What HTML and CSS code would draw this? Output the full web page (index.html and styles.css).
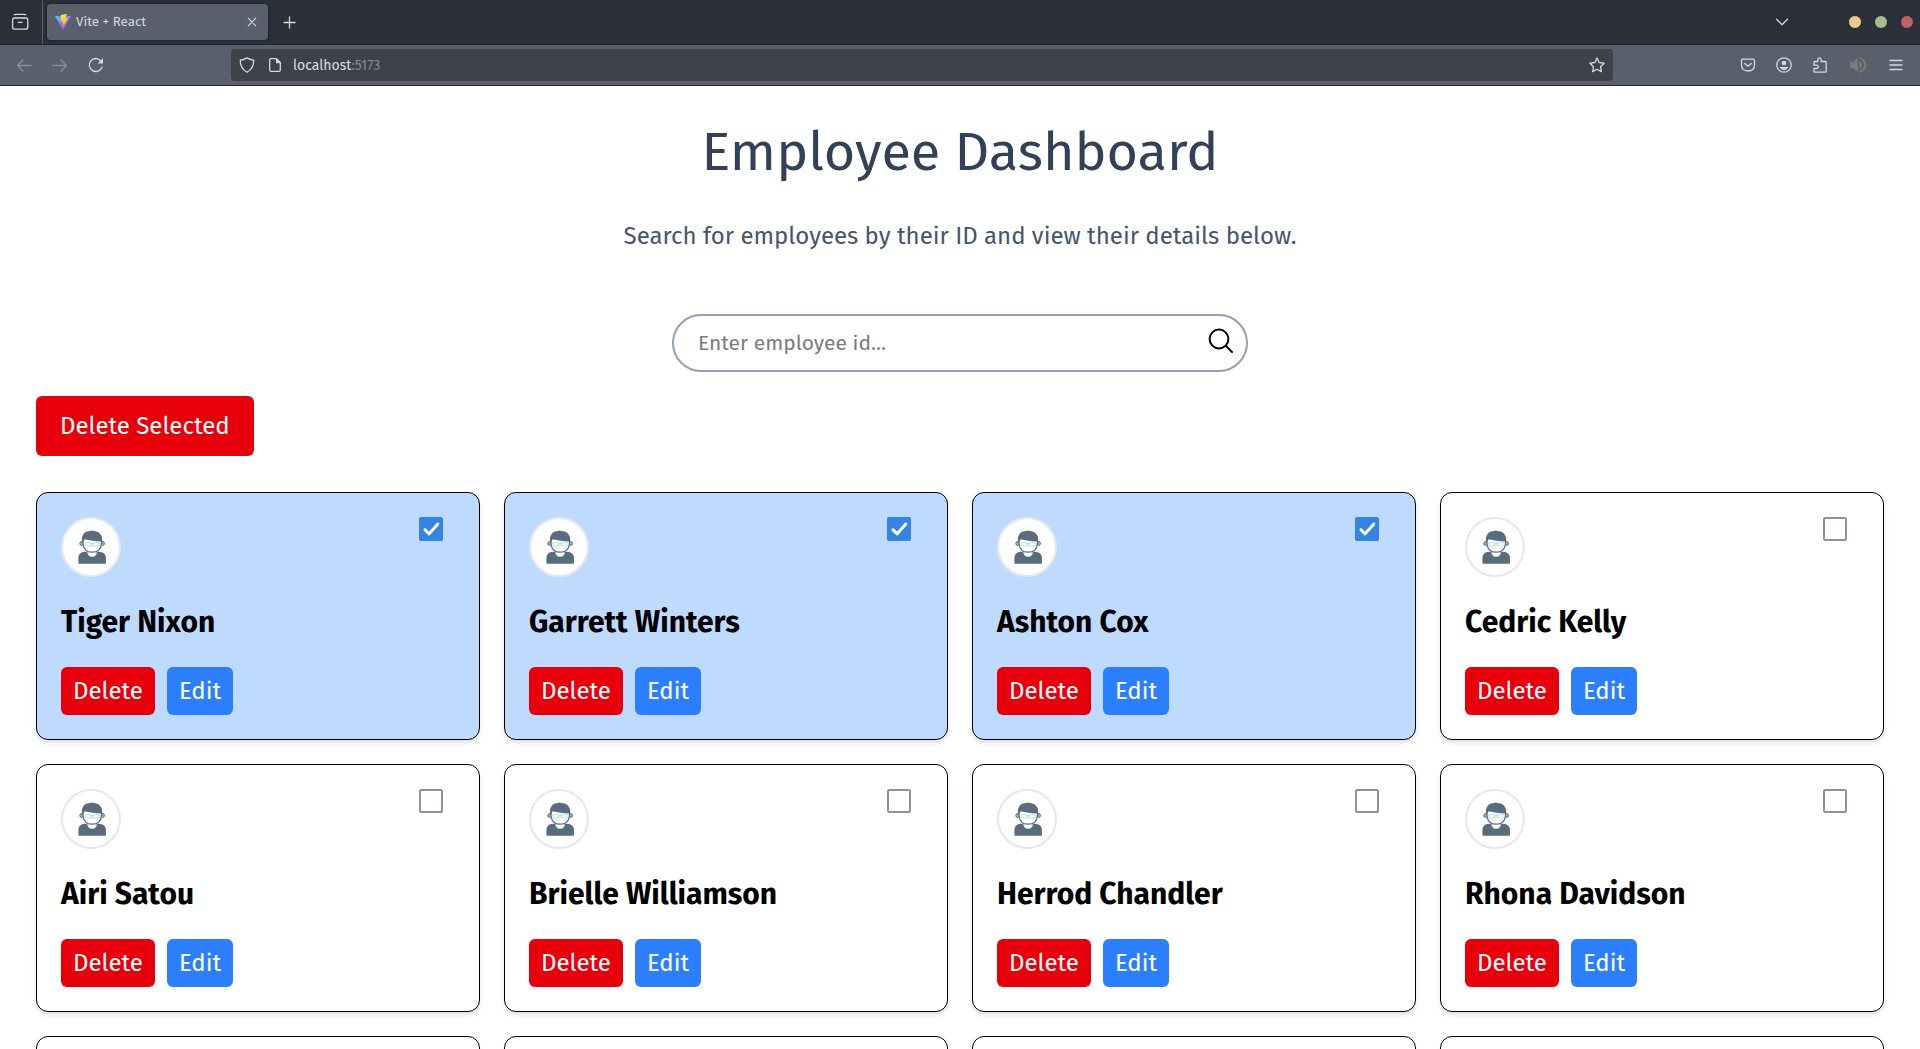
FILE: index.html
```html
<!DOCTYPE html>
<html lang="en">
<head>
<meta charset="utf-8">
<title>Vite + React</title>
<link rel="stylesheet" href="styles.css">
</head>
<body>
<svg class="defs" aria-hidden="true">
  <defs>
    <linearGradient id="vite-body" x1="0" y1="0" x2="0.6" y2="1"><stop offset="0" stop-color="#41d1ff"/><stop offset="1" stop-color="#bd34fe"/></linearGradient>
    <linearGradient id="vite-bolt" x1="0.4" y1="0" x2="0.6" y2="1"><stop offset="0" stop-color="#ffea83"/><stop offset="0.2" stop-color="#ffdd35"/><stop offset="1" stop-color="#ffa800"/></linearGradient>
  </defs>
  <symbol id="person" viewBox="0 0 56 56">
    <path d="M15.4 44.8V39.5Q15.4 32.9 22 32.8H36Q42.9 32.9 42.9 39.5V44.8Z" fill="#5a6b7d"/>
    <path d="M24.6 32.4H33.6Q33.6 37.6 29.1 37.6T24.6 32.4Z" fill="#fff" stroke="#b5e3da" stroke-width=".8"/>
    <circle cx="18.600" cy="24.500" r="1.900" fill="#a3adb8" stroke="#5a6b7d" stroke-width=".9"/>
    <circle cx="39.600" cy="24.500" r="1.900" fill="#a3adb8" stroke="#5a6b7d" stroke-width=".9"/>
    <path d="M20 20H38.400V25Q37.600 33.200 29.200 33.200T20 25Z" fill="#fff" stroke="#5a6b7d" stroke-width="1.200"/>
    <path d="M19 23.200V20.500C19 15.200 22.200 12.200 27 12.100Q28.500 10.800 30.400 12.100C36 12.500 39.200 15.700 39.200 21V23.200L37.800 22.400Q28.500 22.300 22 19.700Q20.400 21 20.400 23.200Z" fill="#5a6b7d"/>
    <path d="M22 23.800H28V27H22.400ZM30.200 23.800H36.200L35.800 27H30.200ZM28 24.600H30.200" fill="none" stroke="#b5e3da" stroke-width="1.100"/>
  </symbol>
</svg>

<header class="browser">
  <div class="tabbar">
    <svg class="view-icon" width="18" height="18" viewBox="0 0 18 18"><path d="M3.4 1.800Q4 1.300 5 1.300H13Q14 1.300 14.600 1.800M1.600 7Q1.600 5 3.600 5H14.800Q16.800 5 16.800 7V14Q16.800 16.200 14.800 16.200H3.600Q1.600 16.200 1.600 14ZM7.500 9.400H11"/></svg>
    <div class="tab">
      <svg class="vite" width="16" height="16" viewBox="0 0 256 257"><path fill="url(#vite-body)" d="M255.2 37.9 134.9 252.900a6.500 6.500 0 0 1-11.400 0L.9 37.900c-2.700-4.700 1.400-10.600 6.800-9.600l120.400 21.500a6.500 6.500 0 0 0 2.300 0l117.900-21.500c5.400-1 9.500 4.800 6.900 9.600z"/><path fill="url(#vite-bolt)" d="M185.400 0 96.400 17.500a3.300 3.300 0 0 0-2.600 3l-5.500 92.500a3.300 3.300 0 0 0 4 3.400l24.800-5.700c2.300-.5 4.400 1.500 3.900 3.800l-7.400 36.100c-.5 2.400 1.800 4.500 4.200 3.800l15.300-4.700c2.400-.7 4.700 1.400 4.200 3.800l-11.700 56.600c-.7 3.500 4 5.500 5.900 2.500l1.300-2L205.400 65.700c1.200-2.400-.9-5.200-3.500-4.700l-25.500 4.900c-2.400.5-4.400-1.800-3.800-4.100l16.700-57.700c.6-2.300-1.500-4.500-3.900-4.100z"/></svg>
      <span class="tab-title">Vite + React</span>
      <svg class="tab-close" width="10" height="10" viewBox="0 0 10 10"><path d="M1.200 1.200 8.800 8.800M8.800 1.200 1.200 8.800"/></svg>
    </div>
    <svg class="new-tab" width="14" height="14" viewBox="0 0 14 14"><path d="M7.500 2V13M2 7.500H13"/></svg>
    <svg class="list-tabs" width="14" height="8" viewBox="0 0 14 8"><path d="M1.500 1.200 7 6.700 12.500 1.200"/></svg>
    <div class="window-buttons"><i class="dot min"></i><i class="dot max"></i><i class="dot close"></i></div>
  </div>
  <div class="toolbar">
    <span class="tool dim"><svg width="16" height="16" viewBox="0 0 16 16"><path d="M15 8.500H1.500M7 3 1.500 8.500 7 14"/></svg></span>
    <span class="tool dim"><svg width="16" height="16" viewBox="0 0 16 16"><path d="M1 8.500H14.500M9 3 14.500 8.500 9 14"/></svg></span>
    <span class="tool"><svg width="16" height="16" viewBox="0 0 16 16"><path d="M14 10A6.500 6.500 0 1 1 12.800 3.800L14 5"/><path class="solid" d="M15 1V6.500H9.500Z"/></svg></span>
    <div class="url">
      <svg width="16" height="16" viewBox="0 0 16 16"><path d="M8 .9Q11.500 3 14.700 3.200Q15 11.200 8 15.200Q1 11.200 1.300 3.200Q4.500 3 8 .9Z"/></svg>
      <svg class="page" width="16" height="16" viewBox="0 0 16 16"><path d="M9.500 1.700H4Q2.700 1.700 2.700 3V13Q2.700 14.300 4 14.300H12Q13.300 14.300 13.300 13V5.500Z"/><path class="solid" d="M9 1.200 13.900 6.200H9Z"/></svg>
      <span class="address">localhost<span class="port">:5173</span></span>
      <svg class="star" width="16" height="16" viewBox="0 0 16 16"><path d="M8 1 10.100 5.500 15.100 6.200 11.500 9.700 12.400 14.800 8 12.300 3.600 14.800 4.500 9.700 .9 6.200 5.900 5.500Z"/></svg>
    </div>
    <div class="actions">
      <span class="tool"><svg width="16" height="16" viewBox="0 0 16 16"><path d="M1.500 3.500Q1.500 2.200 2.800 2.200H13.200Q14.500 2.200 14.500 3.500V7.500Q14.500 14 8 14T1.500 7.500ZM4.700 6.500 8 9.300 11.300 6.500"/></svg></span>
      <span class="tool"><svg width="16" height="16" viewBox="0 0 16 16"><circle cx="8" cy="8" r="7.200"/><circle class="solid" cx="8" cy="6" r="2.300"/><path class="solid" d="M3.800 10H12.200Q11 13 8 13T3.800 10Z"/></svg></span>
      <span class="tool"><svg width="16" height="16" viewBox="0 0 16 16"><path d="M2 14.500V11.500H4.500Q6.300 11.300 6.300 9.800T4.500 8.200H2V5.200Q2 4.500 2.800 4.500H5.800V2.800Q6 .9 7.500 .9T9.200 2.800V4.500H13.200Q14.200 4.500 14.200 5.500V14Q14.200 15.200 13.200 15.200H2.800Q2 15.200 2 14.500Z"/></svg></span>
      <span class="tool wide sound"><svg width="16" height="16" viewBox="0 0 16 16"><path class="solid" d="M0 4.800H3L7.800 1V15L3 11.200H0ZM9.500 4.300Q12 5.600 12 8T9.500 11.700Z"/><path d="M10 1.200Q15 3 15 8T10 14.800"/></svg></span>
      <span class="tool wide"><svg width="14" height="14" viewBox="0 0 14 14"><path d="M1 2.500H13M1 7H13M1 11.500H13"/></svg></span>
    </div>
  </div>
</header>

<main class="dashboard">
  <h1 class="title">Employee Dashboard</h1>
  <p class="subtitle">Search for employees by their ID and view their details below.</p>
  <div class="search">
    <input class="search-input" type="text" placeholder="Enter employee id...">
    <svg class="search-icon" width="28" height="28" viewBox="0 0 28 28"><circle cx="12" cy="12" r="9.400"/><path d="M18.800 18.800 25 25"/></svg>
  </div>
  <button class="btn delete-selected">Delete Selected</button>

  <section class="grid">
    <article class="card selected"><div class="card-top"><svg class="avatar"><use href="#person"/></svg><span class="check"><svg width="24" height="24" viewBox="0 0 24 24"><path d="M6 12.800 10.200 16.800 18.800 7"/></svg></span></div><h2 class="name">Tiger Nixon</h2><div class="row"><button class="btn delete">Delete</button><button class="btn edit">Edit</button></div></article>
    <article class="card selected"><div class="card-top"><svg class="avatar"><use href="#person"/></svg><span class="check"><svg width="24" height="24" viewBox="0 0 24 24"><path d="M6 12.800 10.200 16.800 18.800 7"/></svg></span></div><h2 class="name">Garrett Winters</h2><div class="row"><button class="btn delete">Delete</button><button class="btn edit">Edit</button></div></article>
    <article class="card selected"><div class="card-top"><svg class="avatar"><use href="#person"/></svg><span class="check"><svg width="24" height="24" viewBox="0 0 24 24"><path d="M6 12.800 10.200 16.800 18.800 7"/></svg></span></div><h2 class="name">Ashton Cox</h2><div class="row"><button class="btn delete">Delete</button><button class="btn edit">Edit</button></div></article>
    <article class="card"><div class="card-top"><svg class="avatar"><use href="#person"/></svg><span class="check"></span></div><h2 class="name">Cedric Kelly</h2><div class="row"><button class="btn delete">Delete</button><button class="btn edit">Edit</button></div></article>
    <article class="card"><div class="card-top"><svg class="avatar"><use href="#person"/></svg><span class="check"></span></div><h2 class="name">Airi Satou</h2><div class="row"><button class="btn delete">Delete</button><button class="btn edit">Edit</button></div></article>
    <article class="card"><div class="card-top"><svg class="avatar"><use href="#person"/></svg><span class="check"></span></div><h2 class="name">Brielle Williamson</h2><div class="row"><button class="btn delete">Delete</button><button class="btn edit">Edit</button></div></article>
    <article class="card"><div class="card-top"><svg class="avatar"><use href="#person"/></svg><span class="check"></span></div><h2 class="name">Herrod Chandler</h2><div class="row"><button class="btn delete">Delete</button><button class="btn edit">Edit</button></div></article>
    <article class="card"><div class="card-top"><svg class="avatar"><use href="#person"/></svg><span class="check"></span></div><h2 class="name">Rhona Davidson</h2><div class="row"><button class="btn delete">Delete</button><button class="btn edit">Edit</button></div></article>
    <article class="card"></article>
    <article class="card"></article>
    <article class="card"></article>
    <article class="card"></article>
  </section>
</main>
</body>
</html>
```
FILE: styles.css
```css
* { box-sizing: border-box; margin: 0; padding: 0; }
body {
  height: 1049px;
  overflow: hidden;
  display: flex;
  flex-direction: column;
  background: #fff;
  font-family: "Fira Sans", "Noto Sans", sans-serif;
}
.defs { position: absolute; width: 0; height: 0; }

/* Browser chrome */
.browser { flex: none; height: 86px; border-bottom: 1px solid #242933; }
.browser svg { flex: none; fill: none; stroke: #d3d8e3; stroke-width: 1.3; stroke-linecap: round; stroke-linejoin: round; }
.browser svg.vite { stroke: none; }
.browser .solid { fill: #d3d8e3; stroke: none; }
.tabbar { display: flex; align-items: center; height: 45px; background: #2b303b; border-bottom: 1px solid #20242c; }
.view-icon { margin: 0 13px 0 11px; }
.tab {
  display: flex;
  align-items: center;
  width: 226px;
  height: 44px;
  padding: 0 11px 0 12px;
  border-left: 1px solid #585d6b;
  position: relative;
  z-index: 0;
}
.tab::before {
  content: "";
  position: absolute;
  inset: 4px 0 4px 4px;
  z-index: -1;
  border-radius: 4px;
  background: #5a5f6c;
  box-shadow: 0 0 3px rgba(0, 0, 0, .5);
}
.tab-title { flex: 1; margin-left: 5px; padding-bottom: 1px; color: #d3d8e3; font-size: 13.33px; line-height: 20px; }
.browser .tab-close { stroke-width: 1.1; }
.new-tab { margin-left: 14px; }
.list-tabs { margin-left: auto; margin-right: 59px; }
.window-buttons { display: flex; gap: 12px; margin-right: 6px; }
.dot { width: 14px; height: 14px; border-radius: 50%; border: 1px solid #22262e; }
.min { background: #ebcb8b; }
.max { background: #a3be8c; }
.close { background: #bf616a; }
.toolbar { display: flex; align-items: center; height: 40px; padding: 0 5px 0 6px; background: #5a5f6c; }
.tool { display: flex; justify-content: center; width: 36px; }
.wide { width: 38px; }
.dim { opacity: .4; }
.browser .sound svg { stroke: #7a7a7a; stroke-width: 1.8; }
.browser .sound .solid { fill: #7a7a7a; }
.url {
  display: flex;
  align-items: center;
  width: 1382px;
  height: 32px;
  margin-left: 117px;
  padding: 0 8px;
  border-radius: 4px;
  background: #3f4249;
}
.page { margin-left: 12px; }
.address { margin-left: 10px; padding-top: 2px; color: #d8dee9; font-size: 14px; line-height: 20px; }
.port { color: #868a94; }
.star { margin-left: auto; }
.actions { display: flex; align-items: center; margin-left: auto; }
.actions .tool:nth-child(3) { margin-right: 1px; }

/* Page */
.dashboard { flex: 1; min-height: 0; overflow: hidden; display: flex; flex-direction: column; align-items: center; padding: 36px 36px 0; }
.title { color: #314158; font-size: 54px; font-weight: 400; line-height: 60px; }
.subtitle { margin-top: 36px; color: #45556c; font-size: 24px; line-height: 36px; }
.search {
  flex: none;
  display: flex;
  align-items: center;
  width: 576px;
  height: 58px;
  margin-top: 60px;
  padding: 0 11px 0 24px;
  border: 2px solid #94a0b4;
  border-radius: 29px;
}
.search-input { flex: 1; border: 0; outline: 0; background: none; font: 21px/32px "Fira Sans", "Noto Sans", sans-serif; }
.search-input::placeholder { color: #7b7b7b; }
.search-icon { fill: none; stroke: #000; stroke-width: 2; stroke-linecap: round; margin-bottom: 4px; }
.btn { border: 0; border-radius: 6px; color: #fff; font: 24px/36px "Fira Sans", "Noto Sans", sans-serif; }
.delete-selected { align-self: flex-start; flex: none; padding: 12px 24px; margin-top: 24px; background: #e7000b; }
.grid { display: grid; grid-template-columns: repeat(4, 1fr); grid-auto-rows: 248px; gap: 24px; width: 100%; margin-top: 36px; }
.card {
  padding: 24px;
  border: 1px solid #000;
  border-radius: 12px;
  background: #fff;
  box-shadow: 0 4px 6px -1px rgba(0, 0, 0, .1), 0 2px 4px -2px rgba(0, 0, 0, .1);
}
.selected { background: #bedbff; }
.card-top { display: flex; justify-content: space-between; align-items: flex-start; padding-right: 12px; }
.avatar { width: 60px; height: 60px; border: 2px solid #e5e7eb; border-radius: 50%; background: #fff; }
.check { width: 24px; height: 24px; border: 2px solid #8f8f9d; border-radius: 2px; background: #fff; }
.selected .check { border: 0; background: #3584e4; }
.check svg { display: block; fill: none; stroke: #fff; stroke-width: 3; stroke-linecap: round; stroke-linejoin: round; }
.name { margin-top: 27px; font-size: 30px; font-weight: 700; line-height: 36px; }
.row { display: flex; gap: 12px; margin-top: 27px; }
.row .btn { padding: 6px 12px; }
.delete { background: #e7000b; }
.edit { background: #2b7fff; }
```
